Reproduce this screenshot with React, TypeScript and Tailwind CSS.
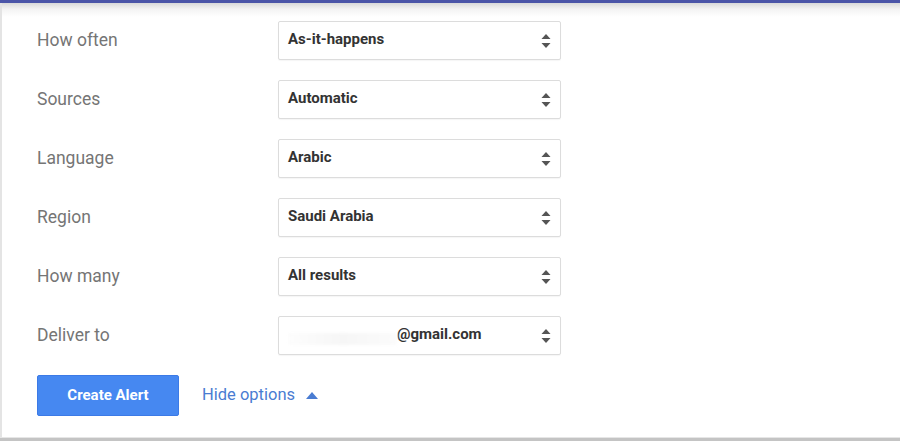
import React from "react";

const rows: { label: string; value: string; email?: boolean }[] = [
  { label: "How often", value: "As-it-happens" },
  { label: "Sources", value: "Automatic" },
  { label: "Language", value: "Arabic" },
  { label: "Region", value: "Saudi Arabia" },
  { label: "How many", value: "All results" },
  { label: "Deliver to", value: "@gmail.com", email: true },
];

function Arrows() {
  return (
    <svg width="10" height="16" viewBox="0 0 10 16" className="shrink-0">
      <path d="M5 1 L9.5 6 L0.5 6 Z" fill="#555" />
      <path d="M5 15 L9.5 10 L0.5 10 Z" fill="#555" />
    </svg>
  );
}

export default function App() {
  return (
    <div className="w-[900px] h-[441px] flex flex-col bg-white font-['Roboto',sans-serif] overflow-hidden">
      <div className="h-[3px] bg-[#4b55a8] shrink-0" />
      <div className="flex-1 flex flex-col border-l-2 border-[#e4e4e4] bg-[linear-gradient(to_bottom,#d9d9d9_0px,#f3f3f3_6px,#ffffff_14px)] pl-[35px] pt-[18px]">
        <div className="flex flex-col gap-[20px]">
          {rows.map((r) => (
            <div key={r.label} className="flex items-center h-[39px]">
              <div className="w-[241px] text-[17.5px] text-[#757575] leading-none">{r.label}</div>
              <div className="w-[283px] h-[39px] border border-[#dcdcdc] rounded-[2px] flex items-center pl-[9px] pr-[9px] bg-white shadow-[0_1px_1px_rgba(0,0,0,0.04)]">
                {r.email ? (
                  <div className="flex-1 flex items-center">
                    <span className="w-[109px] h-[12px] shrink-0 mt-[6px] bg-[linear-gradient(to_right,#fdfdfd,#f6f6f6,#fbfbfb)] blur-[1.5px]" />
                    <span className="text-[15px] font-bold text-[#333] -mt-[2px]">{r.value}</span>
                  </div>
                ) : (
                  <span className="flex-1 text-[15px] font-bold text-[#333] -mt-[2px]">{r.value}</span>
                )}
                <Arrows />
              </div>
            </div>
          ))}
        </div>
        <div className="flex items-center mt-[20px]">
          <button className="w-[142px] h-[41px] bg-[#4688f1] border border-[#3c7ae6] rounded-[2px] text-white text-[15px] font-bold">
            Create Alert
          </button>
          <span className="ml-[23px] text-[16.5px] text-[#4a7cd2]">Hide options</span>
          <svg width="12" height="7" viewBox="0 0 12 7" className="ml-[11px]">
            <path d="M6 0 L12 7 L0 7 Z" fill="#4a7cd2" />
          </svg>
        </div>
      </div>
      <div className="h-[1px] bg-[#e6e6e6] shrink-0" />
      <div className="h-[3px] bg-[#c4c4c4] shrink-0" />
    </div>
  );
}
